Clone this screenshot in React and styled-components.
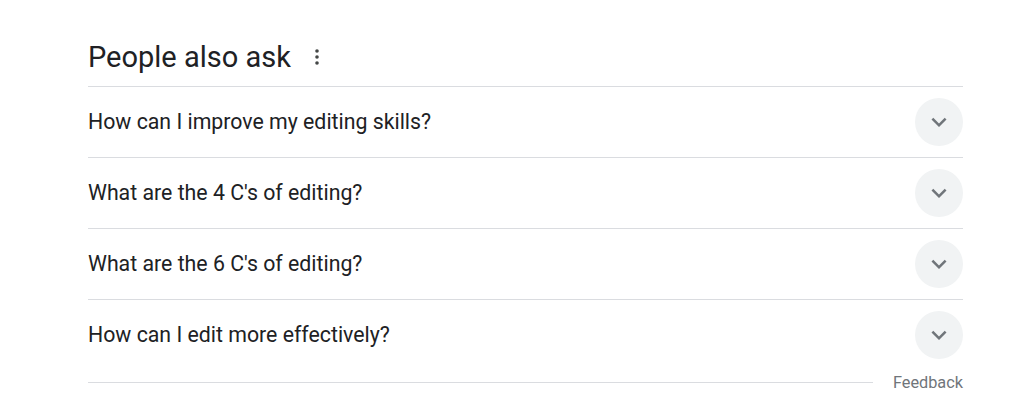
import React from 'react'
import styled, { createGlobalStyle } from 'styled-components'

const questions = [
  'How can I improve my editing skills?',
  "What are the 4 C's of editing?",
  "What are the 6 C's of editing?",
  'How can I edit more effectively?',
]

const GlobalStyle = createGlobalStyle`
  body {
    margin: 0;
    background: #fff;
    font-family: Roboto, Arial, sans-serif;
    color: #202124;
  }
`

const Wrapper = styled.div`
  width: 875px;
  padding: 38px 0 0 88px;
`

const Header = styled.div`
  display: flex;
  align-items: center;
  height: 38px;
  padding-bottom: 10px;
  border-bottom: 1px solid #dadce0;
`

const Title = styled.h2`
  margin: 0;
  font-size: 29px;
  font-weight: 400;
  line-height: 36px;
  margin-top: -1px;
`

const MoreButton = styled.div`
  display: flex;
  align-items: center;
  justify-content: center;
  width: 24px;
  height: 24px;
  margin-left: 14px;
  color: #444746;
`

const Row = styled.div`
  display: flex;
  align-items: center;
  justify-content: space-between;
  height: 70px;
  border-bottom: 1px solid ${({ $last }) => ($last ? 'transparent' : '#dadce0')};
`

const Question = styled.span`
  font-size: 21.3px;
  line-height: 28px;
`

const Chevron = styled.div`
  display: flex;
  align-items: center;
  justify-content: center;
  width: 48px;
  height: 48px;
  border-radius: 50%;
  background: #f1f3f4;
  color: #70757a;
`

const Footer = styled.div`
  display: flex;
  align-items: center;
  height: 22px;
`

const Line = styled.div`
  flex: 1;
  height: 1px;
  background: #dadce0;
  margin-right: 20px;
`

const Feedback = styled.span`
  font-size: 16.3px;
  color: #70757a;
`

const App = () => {
  return (
    <>
      <GlobalStyle />
      <Wrapper>
        <Header>
          <Title>People also ask</Title>
          <MoreButton>
            <svg width="4" height="16" viewBox="0 0 4 16" fill="currentColor">
              <circle cx="2" cy="2" r="1.8" />
              <circle cx="2" cy="8" r="1.8" />
              <circle cx="2" cy="14" r="1.8" />
            </svg>
          </MoreButton>
        </Header>
        {questions.map((q, i) => (
          <Row key={q} $last={i === questions.length - 1}>
            <Question>{q}</Question>
            <Chevron>
              <svg width="30" height="30" viewBox="0 0 24 24" fill="currentColor">
                <path d="M16.59 8.59 12 13.17 7.41 8.59 6 10l6 6 6-6z" />
              </svg>
            </Chevron>
          </Row>
        ))}
        <Footer>
          <Line />
          <Feedback>Feedback</Feedback>
        </Footer>
      </Wrapper>
    </>
  )
}

export default App
